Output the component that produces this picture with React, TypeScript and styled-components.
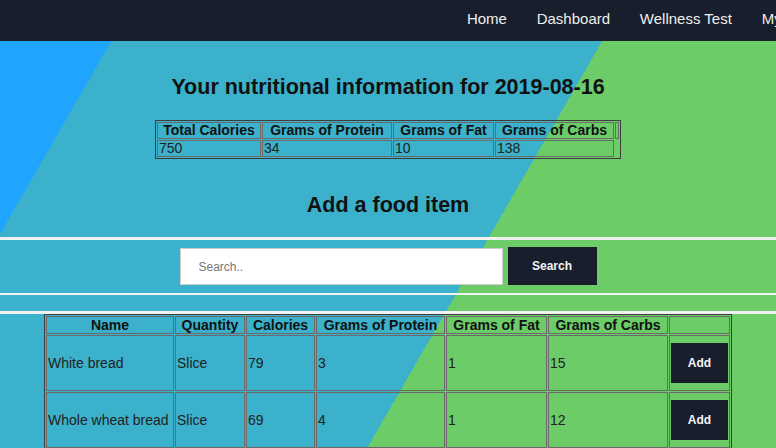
import React from "react";
import styled, { createGlobalStyle } from "styled-components";

const GlobalStyle = createGlobalStyle`
  html, body {
    margin: 0;
    padding: 0;
    overflow: hidden;
  }
  body {
    font-family: "Liberation Sans", Arial, sans-serif;
  }
  * { box-sizing: border-box; }
`;

const Page = styled.div`
  min-height: 100vh;
  background: linear-gradient(
    120deg,
    #1fa5fe 117px,
    #3bb1cb 117px,
    #3bb1cb 542px,
    #6ccc68 542px
  );
  background-attachment: fixed;
  display: flex;
  flex-direction: column;
  align-items: center;
`;

const NavBar = styled.nav`
  align-self: stretch;
  height: 41px;
  background: #181e2b;
  display: flex;
  align-items: center;
  padding-left: 452px;
  white-space: nowrap;
  overflow: hidden;
`;

const NavLink = styled.a`
  color: #eeeeee;
  font-size: 15px;
  padding: 0 14.9px;
  text-decoration: none;
  line-height: 38px;
  margin-top: -3px;
`;

const Title = styled.h2<{ $top: number }>`
  margin: ${(p) => p.$top}px 0 0;
  font-size: 21.5px;
  line-height: 25px;
  font-weight: bold;
  color: #111;
`;

const Table = styled.table<{ $width: number; $top: number; $lh: number }>`
  width: ${(p) => p.$width}px;
  margin-top: ${(p) => p.$top}px;
  table-layout: fixed;
  border: 1px solid #3d3d3d;
  border-spacing: 1px;
  font-size: 14px;
  line-height: ${(p) => p.$lh}px;
`;

const Th = styled.th<{ $w: number }>`
  width: ${(p) => p.$w}px;
  border: 1px solid #6a6a6a;
  padding: 0 1px;
  font-weight: bold;
  color: #111;
  text-align: center;
  white-space: nowrap;
  overflow: hidden;
`;

const Td = styled.td`
  border: 1px solid #6a6a6a;
  padding: 0 1px;
  color: #222;
  text-align: left;
  vertical-align: middle;
  white-space: nowrap;
`;

const Divider = styled.div<{ $h: number; $top: number }>`
  align-self: stretch;
  height: ${(p) => p.$h}px;
  margin-top: ${(p) => p.$top}px;
  background: #f1f1f1;
`;

const SearchForm = styled.form`
  margin-top: 7px;
  display: flex;
  align-items: flex-end;
  gap: 5px;
`;

const SearchInput = styled.input`
  width: 323px;
  height: 37px;
  border: 1px solid #cccccc;
  background: #fff;
  padding: 0 18px;
  font-family: "Liberation Sans", Arial, sans-serif;
  font-size: 12px;
  outline: none;
  &::placeholder {
    color: #777;
  }
`;

const DarkButton = styled.button<{ $w: number; $h: number }>`
  width: ${(p) => p.$w}px;
  height: ${(p) => p.$h}px;
  background: #181e2b;
  color: #f4f4f4;
  border: none;
  font-family: "Liberation Sans", Arial, sans-serif;
  font-weight: bold;
  font-size: 12px;
  padding: 0;
  cursor: pointer;
  display: block;
`;

const AddCell = styled(Td)`
  padding: 7px 1px 7px;
`;

const foods = [
  { name: "White bread", qty: "Slice", cal: 79, protein: 3, fat: 1, carbs: 15 },
  { name: "Whole wheat bread", qty: "Slice", cal: 69, protein: 4, fat: 1, carbs: 12 },
];

export default function App() {
  return (
    <>
      <GlobalStyle />
      <Page>
        <NavBar>
          <NavLink href="#">Home</NavLink>
          <NavLink href="#">Dashboard</NavLink>
          <NavLink href="#">Wellness Test</NavLink>
          <NavLink href="#">My Profile</NavLink>
          <NavLink href="#">Logout</NavLink>
        </NavBar>

        <Title $top={34}>Your nutritional information for 2019-08-16</Title>

        <Table $width={466} $top={20} $lh={15}>
          <thead>
            <tr>
              <Th $w={104}>Total Calories</Th>
              <Th $w={130}>Grams of Protein</Th>
              <Th $w={101}>Grams of Fat</Th>
              <Th $w={119}>Grams of Carbs</Th>
              <Th $w={4}></Th>
            </tr>
          </thead>
          <tbody>
            <tr>
              <Td>750</Td>
              <Td>34</Td>
              <Td>10</Td>
              <Td>138</Td>
            </tr>
          </tbody>
        </Table>

        <Title $top={34}>Add a food item</Title>

        <Divider $h={3} $top={19} />
        <SearchForm onSubmit={(e) => e.preventDefault()}>
          <SearchInput type="text" placeholder="Search.." />
          <DarkButton $w={89} $h={38} type="submit">
            Search
          </DarkButton>
        </SearchForm>
        <Divider $h={2} $top={8} />
        <Divider $h={3} $top={16} />

        <Table $width={688} $top={0} $lh={16}>
          <thead>
            <tr>
              <Th $w={128}>Name</Th>
              <Th $w={70}>Quantity</Th>
              <Th $w={69}>Calories</Th>
              <Th $w={129}>Grams of Protein</Th>
              <Th $w={101}>Grams of Fat</Th>
              <Th $w={120}>Grams of Carbs</Th>
              <Th $w={61}></Th>
            </tr>
          </thead>
          <tbody>
            {foods.map((f) => (
              <tr key={f.name}>
                <Td>{f.name}</Td>
                <Td>{f.qty}</Td>
                <Td>{f.cal}</Td>
                <Td>{f.protein}</Td>
                <Td>{f.fat}</Td>
                <Td>{f.carbs}</Td>
                <AddCell>
                  <DarkButton $w={57} $h={40} type="button">
                    Add
                  </DarkButton>
                </AddCell>
              </tr>
            ))}
          </tbody>
        </Table>
      </Page>
    </>
  );
}
